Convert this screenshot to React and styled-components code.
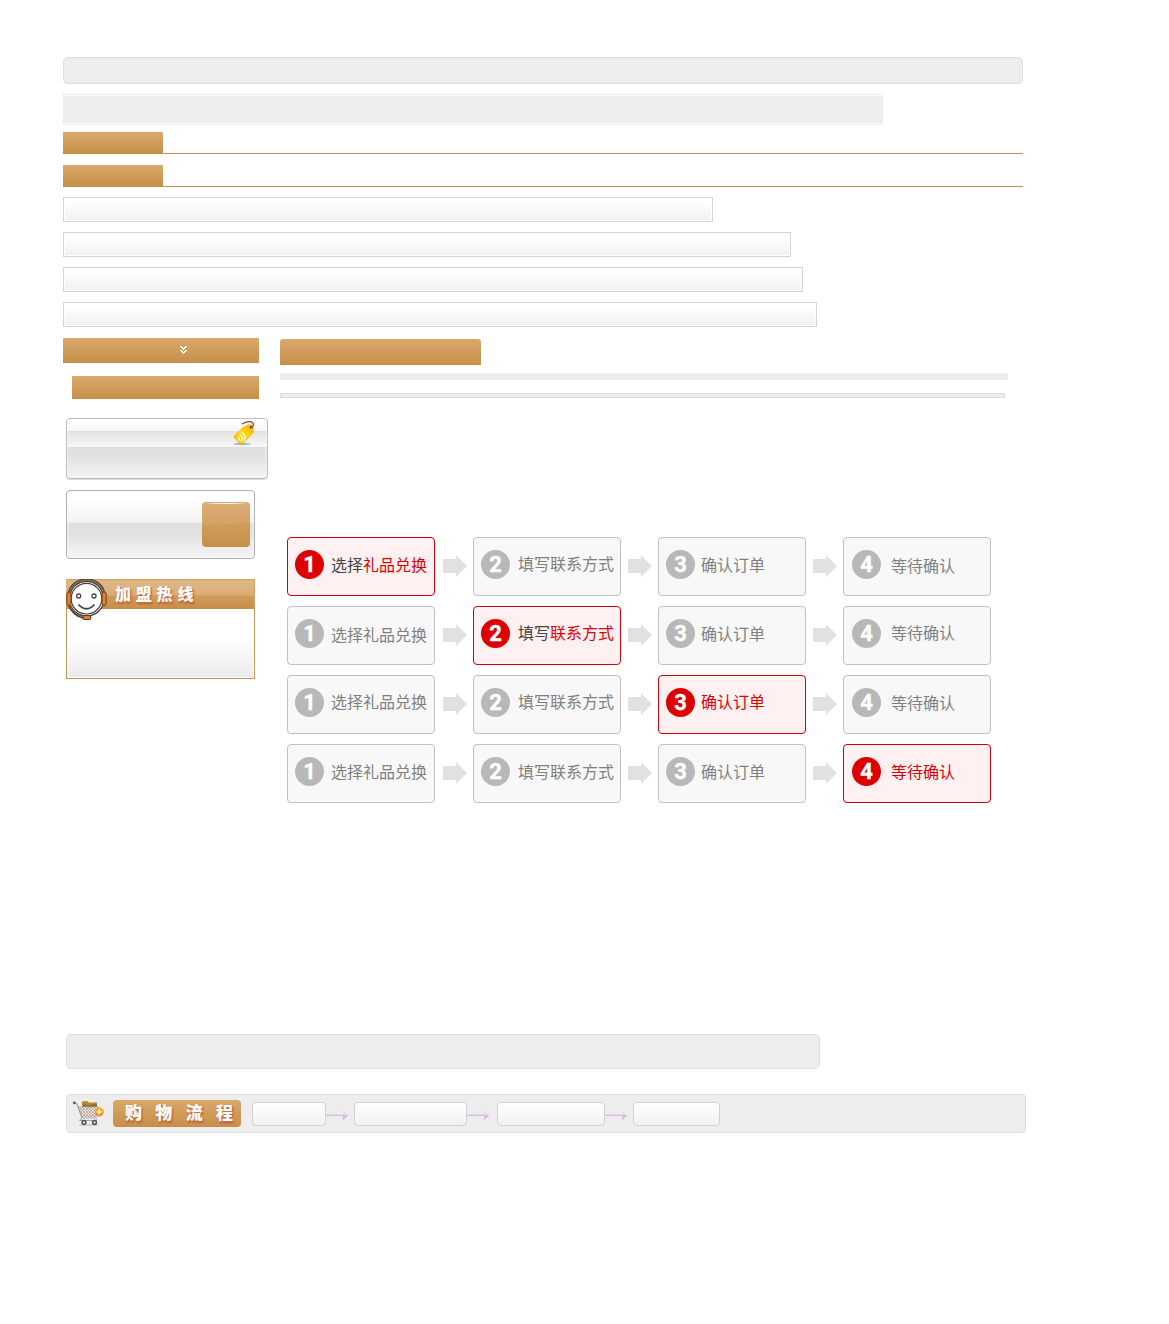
import React from "react";
import styled, { createGlobalStyle, css } from "styled-components";

const GlobalStyle = createGlobalStyle`
  *, *::before, *::after { box-sizing: border-box; }
  html, body { margin: 0; padding: 0; background: #fff; }
  body { font-family: "Liberation Sans", "Noto Sans CJK SC", sans-serif; }
  svg { display: block; }
`;

const gold = css`
  background: linear-gradient(#d9a86c, #c68f48);
`;

const Page = styled.main`
  width: 1169px;
  height: 1324px;
  padding: 57px 0 0 63px;
  overflow: hidden;
`;

const RoundedBar = styled.div`
  width: ${(p) => p.$width}px;
  height: ${(p) => p.$height}px;
  border: 1px solid #dedede;
  border-radius: 5px;
  background: #ededed;
`;

const FramedBar = styled.div`
  width: 820px;
  height: 31px;
  margin-top: 10px;
  border: 1px solid #ececec;
  padding: 1px 0;
  background: #ededed content-box;
`;

const TabStrip = styled.div`
  width: 960px;
  height: 22px;
  margin-top: ${(p) => p.$top}px;
  border-bottom: 1px solid #c9914b;
`;

const Tab = styled.div`
  width: 100px;
  height: 22px;
  ${gold}
`;

const FieldList = styled.div`
  display: flex;
  flex-direction: column;
  gap: 10px;
  margin-top: 10px;
`;

const Field = styled.div`
  width: ${(p) => p.$width}px;
  height: 25px;
  border: 1px solid #d3d3d3;
  padding: 1px;
  background: linear-gradient(#fff 10%, #f1f1f1) content-box;
`;

const Columns = styled.div`
  display: grid;
  grid-template-columns: 217px 1fr;
  height: 696px;
  margin-top: 11px;
`;

const Sidebar = styled.aside`
  display: flex;
  flex-direction: column;
  align-items: flex-start;
`;

const MenuHead = styled.div`
  display: flex;
  width: 196px;
  height: 25px;
  padding: 8px 0 0 117px;
  border-radius: 1px 1px 0 0;
  ${gold}
`;

const MenuItem = styled.div`
  width: 187px;
  height: 23px;
  margin: 13px 0 0 9px;
  ${gold}
`;

const GlossPanel = styled.div`
  display: flex;
  justify-content: flex-end;
  width: 202px;
  height: 61px;
  margin: 19px 0 0 3px;
  padding: 1px 10px 0 0;
  border: 1px solid #bdbdbd;
  border-radius: 4px;
  box-shadow: inset 0 0 3px #fff, 0 1px 0 #dcdcdc;
  background: linear-gradient(#fff 0, #f5f5f5 12px, #e0e0e0 12px, #f8f8f8 28px, #dfdfdf 28px, #e2e2e2 38px, #f4f4f4 60px);
`;

const ActionPanel = styled.div`
  display: flex;
  justify-content: flex-end;
  width: 189px;
  height: 69px;
  margin: 11px 0 0 3px;
  padding: 11px 4px 0 0;
  border: 1px solid #b0b0b0;
  border-radius: 4px;
  box-shadow: inset 0 0 3px #fff;
  background: linear-gradient(#fff 0, #fff 8px, #f1f1f1 32px, #dfdfdf 32px, #e2e2e2 43px, #f5f5f5 67px);
`;

const GoldButton = styled.div`
  width: 48px;
  height: 45px;
  border-radius: 4px;
  overflow: hidden;
`;

const Hotline = styled.section`
  width: 189px;
  height: 100px;
  margin: 20px 0 0 3px;
  border: 1px solid #c9944f;
  border-top: 0;
  padding: 0 1px 1px;
  background: linear-gradient(#fff 60%, #ebebeb) content-box;
`;

const HotlineHead = styled.header`
  display: flex;
  height: 30px;
  margin: 0 -2px;
  border: 1px solid #d3a468;
  border-width: 1px 1px 0 0;
  background: linear-gradient(#dbb07a 0, #dfb887 2px, #d9ac74 15px, #d09c5a 16px, #c68f48 29px);
`;

const Mascot = styled.svg`
  flex: none;
  margin-top: -1px;
`;

const HotlineTitle = styled.h2`
  margin: 0 0 0 6px;
  font: 900 16px/27px "Noto Sans CJK SC", sans-serif;
  letter-spacing: 4.8px;
  color: #fff;
  text-shadow: 1px 1px 0 #cf6f46, 1px 2px 2px #c2532a;
  white-space: nowrap;
`;

const Content = styled.section`
  padding-top: 1px;
`;

const ContentHead = styled.div`
  width: 201px;
  height: 26px;
  border-radius: 3px 3px 0 0;
  ${gold}
`;

const PlainRule = styled.div`
  width: 728px;
  height: 7px;
  margin-top: 8px;
  background: #ededed;
`;

const BorderedRule = styled.div`
  width: 725px;
  height: 5px;
  margin-top: 13px;
  border: 1px solid #dedede;
  background: #ededed;
`;

const StepTable = styled.div`
  display: flex;
  flex-direction: column;
  gap: 10px;
  margin: 139px 0 0 7px;
`;

const StepRow = styled.div`
  display: grid;
  grid-template-columns: 148px 38px 148px 37px 148px 37px 148px;
`;

const StepCard = styled.div`
  display: flex;
  height: 59px;
  padding: 12px 0 0 ${(p) => p.$inset}px;
  border: 1px solid ${(p) => (p.$active ? "#d30008" : "#c1c1c1")};
  border-radius: 4px;
  background: ${(p) => (p.$active ? "#fff1f1" : "#f8f8f8")};
`;

const StepNumber = styled.span`
  flex: none;
  width: 29px;
  height: 29px;
  border-radius: 50%;
  background: ${(p) => (p.$active ? "#dc0005" : "#b8b8b8")};
  color: #fff;
  font: 700 22px/29px Roboto, sans-serif;
  -webkit-text-stroke: 0.4px #fff;
  text-align: center;
`;

const StepLabel = styled.span`
  height: 24px;
  margin: ${(p) => p.$top}px 0 0 ${(p) => p.$gap}px;
  font: 400 16px/24px "Noto Sans CJK SC", sans-serif;
  color: ${(p) => (p.$active ? "#dc0005" : "#808080")};
  white-space: nowrap;
`;

const Lead = styled.span`
  color: ${(p) => (p.$active ? "#444" : "inherit")};
`;

const StepArrow = styled.svg`
  margin: 18px 0 0 ${(p) => p.$left}px;
`;

const FooterBar = styled.div`
  margin-left: 3px;
`;

const FlowBar = styled.section`
  display: flex;
  align-items: flex-start;
  width: 960px;
  height: 39px;
  margin: 25px 0 0 3px;
  padding: 5px 0 0 5px;
  border: 1px solid #dedede;
  border-radius: 4px;
  background: #ededed;
`;

const FlowTitle = styled.h2`
  display: flex;
  flex: none;
  justify-content: space-between;
  width: 128px;
  height: 27px;
  margin: 0 11px 0 8px;
  padding: 0 8px 0 12px;
  border-radius: 4px;
  font: 900 17px/24px "Noto Sans CJK SC", sans-serif;
  color: #fff;
  text-shadow: 1px 1px 0 #cf6f46, 1px 2px 2px #c2532a;
  ${gold}
`;

const FlowBox = styled.div`
  width: ${(p) => p.$width}px;
  height: 24px;
  margin-top: 2px;
  border: 1px solid #d2d2d2;
  border-radius: 4px;
  background: linear-gradient(#fff, #f1f1f1);
`;

const FlowGap = styled.div`
  width: ${(p) => p.$width}px;
  padding-top: 11px;
`;

const Chevrons = () => (
  <svg width="8" height="9" viewBox="0 0 8 9" fill="#fff" shapeRendering="crispEdges">
    <path d="M0 0H2V1H3V2H4V1H5V0H7V1H6V2H5V3H4V4H3V3H2V2H1V1H0ZM0 4H2V5H3V6H4V5H5V4H7V5H6V6H5V7H4V8H3V7H2V6H1V5H0Z" />
  </svg>
);

const TagIcon = () => (
  <svg width="26" height="26" viewBox="0 0 26 26">
    <defs>
      <linearGradient id="tag" x1="0" y1="1" x2="1" y2="0">
        <stop offset="0" stopColor="#ffb800" />
        <stop offset=".5" stopColor="#ffdf00" />
        <stop offset="1" stopColor="#f5a51a" />
      </linearGradient>
    </defs>
    <ellipse cx="11" cy="24" rx="9" ry="1.2" fill="#666" opacity=".45" />
    <path d="M12 7.5 18 4.5 22 5.5 22.5 12 12 23.5 10 24.5 3 17.5 3.2 16Z" fill="url(#tag)" stroke="#efac1c" strokeWidth=".7" />
    <circle cx="20" cy="7.3" r="1.2" fill="#7b3c1c" />
    <path d="M11 4C14 2.5 18 .5 21 2.2 23.5 4 22.5 7 20 7" fill="none" stroke="#754c38" strokeWidth="1.1" />
    <path d="M7.5 17.5Q9 18.5 7.8 20M9.3 15Q12.3 17.3 10.2 20.8M11.3 12.8Q15.7 16 12.8 20.8" fill="none" stroke="#fffbe6" strokeWidth="1.5" strokeLinecap="round" />
  </svg>
);

const ButtonFace = () => (
  <svg width="48" height="45">
    <defs>
      <linearGradient id="face" x2="0" y2="1">
        <stop stopColor="#d8a86d" />
        <stop offset="1" stopColor="#c68f48" />
      </linearGradient>
    </defs>
    <path d="M0 0H48V45H0Z" fill="url(#face)" />
    <path d="M0 0H48V19Q32 23 0 23Z" fill="#fff" opacity=".07" />
    <path d="M3 1.4Q24 .4 45 1.4 24 2.4 3 1.4Z" fill="#fff" opacity=".9" />
  </svg>
);

const MascotIcon = () => (
  <Mascot width="43" height="42" viewBox="0 0 43 42">
    <circle cx="20.5" cy="19" r="18" fill="#fff" stroke="#48413e" strokeWidth="1.4" />
    <path d="M3.5 14C7-3 34-3 37.5 14" fill="none" stroke="#48413e" strokeWidth="3.6" />
    <path d="M3.5 14C7-3 34-3 37.5 14" fill="none" stroke="#a77750" strokeWidth="1.2" />
    <circle cx="20.5" cy="19.7" r="15.3" fill="#fff" stroke="#48413e" strokeWidth="1.2" />
    <path d="M3.5 26Q7 36 18 38.5" fill="none" stroke="#48413e" strokeWidth="3.2" />
    <path d="M4 26Q7.5 35.5 18 38.5" fill="none" stroke="#a77750" strokeWidth="1" />
    <rect x=".8" y="13" width="4.2" height="13.5" rx="2" fill="#f07a20" stroke="#5d4030" />
    <rect x="36" y="13" width="4.2" height="13.5" rx="2" fill="#f07a20" stroke="#5d4030" />
    <rect x="16.8" y="36.5" width="8" height="4" rx="1.8" fill="#f07a20" stroke="#48413e" strokeWidth="1.2" />
    <g fill="none" stroke="#48413e" strokeWidth="1.3">
      <circle cx="12.7" cy="17" r="2" />
      <circle cx="28" cy="17" r="2" />
      <path d="M12.5 25.5Q20.5 34 28.5 25.5" strokeWidth="1.8" />
    </g>
  </Mascot>
);

const CartIcon = () => (
  <svg width="33" height="28" viewBox="0 0 33 28">
    <defs>
      <pattern id="mesh" width="3" height="3" patternUnits="userSpaceOnUse">
        <path d="M0 0H3V3H0Z" fill="#f0e8e0" />
        <path d="M0 0 3 3M3 0 0 3" stroke="#ae958a" strokeWidth=".7" />
      </pattern>
      <linearGradient id="plus" x2="0" y2="1">
        <stop stopColor="#ffbd3b" />
        <stop offset="1" stopColor="#f27a00" />
      </linearGradient>
    </defs>
    <path d="M10 1.5 15 1 17 2.5 25 2.5V8H10Z" fill="#b98b31" />
    <path d="M11 4 17 5 25 3.5V8H11Z" fill="#98702a" />
    <path d="M6 7H27L24 17H10Z" fill="url(#mesh)" stroke="#a9a29e" strokeWidth=".7" />
    <path d="M2 3 5 4 10 18 8 20.5H25" fill="none" stroke="#a0a0a0" strokeWidth="1.1" />
    <circle cx="2.3" cy="2.8" r="1.4" fill="#555" />
    <path d="M10 18H25L24 20.5" fill="none" stroke="#bbb" strokeWidth="1" />
    <ellipse cx="17" cy="25" rx="10" ry="1" fill="#999" opacity=".35" />
    <circle cx="12" cy="22.5" r="1.9" fill="#ddd" stroke="#555" strokeWidth="1.5" />
    <circle cx="22.5" cy="22.5" r="1.9" fill="#ddd" stroke="#555" strokeWidth="1.5" />
    <circle cx="27.3" cy="12" r="4.2" fill="url(#plus)" stroke="#ef951d" strokeWidth=".6" />
    <path d="M24.8 12H29.8M27.3 9.5V14.5" stroke="#fff" strokeWidth="1.6" />
  </svg>
);

const FlowArrow = ({ width }) => (
  <FlowGap $width={width}>
    <svg width="22" height="10" viewBox="0 0 22 10" shapeRendering="crispEdges">
      <path d="M0 3H18V4H0Z" fill="#ead9ed" />
      <path d="M0 4H18V5H0Z" fill="#d8bce0" />
      <path d="M17 0 22 4H17Z" fill="#eadced" />
      <path d="M17 4H22L17 9Z" fill="#d8bce0" />
    </svg>
  </FlowGap>
);

const steps = [
  { lead: "选择", rest: "礼品兑换", inset: 7, gap: 7, tops: [2, 3, 1, 2] },
  { lead: "填写", rest: "联系方式", inset: 7, gap: 8, tops: [1, 1, 1, 2] },
  { lead: "", rest: "确认订单", inset: 7, gap: 6, tops: [2, 2, 1, 2] },
  { lead: "", rest: "等待确认", inset: 8, gap: 10, tops: [3, 1, 2, 2] },
];

const arrowInsets = [8, 7, 7];

const Step = ({ index, row }) => {
  const step = steps[index];
  const active = index === row;
  return (
    <StepCard $active={active} $inset={step.inset}>
      <StepNumber $active={active}>{index + 1}</StepNumber>
      <StepLabel $active={active} $gap={step.gap} $top={step.tops[row]}>
        <Lead $active={active}>{step.lead}</Lead>
        {step.rest}
      </StepLabel>
    </StepCard>
  );
};

export default function App() {
  return (
    <Page>
      <GlobalStyle />
      <RoundedBar $width={960} $height={27} />
      <FramedBar />
      <TabStrip $top={7}>
        <Tab />
      </TabStrip>
      <TabStrip $top={11}>
        <Tab />
      </TabStrip>
      <FieldList>
        {[650, 728, 740, 754].map((width) => (
          <Field key={width} $width={width} />
        ))}
      </FieldList>
      <Columns>
        <Sidebar>
          <MenuHead>
            <Chevrons />
          </MenuHead>
          <MenuItem />
          <GlossPanel>
            <TagIcon />
          </GlossPanel>
          <ActionPanel>
            <GoldButton>
              <ButtonFace />
            </GoldButton>
          </ActionPanel>
          <Hotline>
            <HotlineHead>
              <MascotIcon />
              <HotlineTitle>加盟热线</HotlineTitle>
            </HotlineHead>
          </Hotline>
        </Sidebar>
        <Content>
          <ContentHead />
          <PlainRule />
          <BorderedRule />
          <StepTable>
            {steps.map((_, row) => (
              <StepRow key={row}>
                {steps.map((__, index) => (
                  <React.Fragment key={index}>
                    <Step index={index} row={row} />
                    {index < 3 && (
                      <StepArrow $left={arrowInsets[index]} width="24" height="22" viewBox="0 0 24 22">
                        <path d="M0 4H13V0L24 11 13 22V18H0Z" fill="#e1e1e1" />
                      </StepArrow>
                    )}
                  </React.Fragment>
                ))}
              </StepRow>
            ))}
          </StepTable>
        </Content>
      </Columns>
      <FooterBar>
        <RoundedBar $width={754} $height={35} />
      </FooterBar>
      <FlowBar>
        <CartIcon />
        <FlowTitle>
          {[..."购物流程"].map((char) => (
            <span key={char}>{char}</span>
          ))}
        </FlowTitle>
        <FlowBox $width={74} />
        <FlowArrow width={28} />
        <FlowBox $width={113} />
        <FlowArrow width={30} />
        <FlowBox $width={108} />
        <FlowArrow width={28} />
        <FlowBox $width={87} />
      </FlowBar>
    </Page>
  );
}
